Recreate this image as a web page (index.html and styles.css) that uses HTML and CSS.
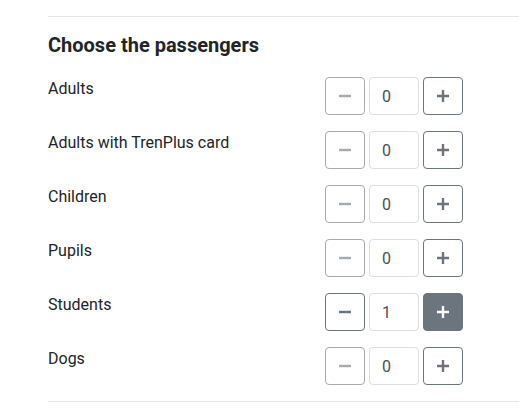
FILE: index.html
```html
<!DOCTYPE html>
<html lang="en">
<head>
<meta charset="utf-8">
<link rel="stylesheet" href="styles.css">
</head>
<body>
<section class="panel">
  <h2 class="title">Choose the passengers</h2>
  <div class="rows">
    <div class="row">
      <span class="label">Adults</span>
      <div class="spinner">
        <button class="btn btn-minus is-disabled" aria-label="Remove"><svg viewBox="0 0 14 14"><path d="M1 7h12"/></svg></button>
        <input class="count" value="0" readonly>
        <button class="btn btn-plus" aria-label="Add"><svg viewBox="0 0 14 14"><path d="M1 7h12M7 1v12"/></svg></button>
      </div>
    </div>
    <div class="row">
      <span class="label">Adults with TrenPlus card</span>
      <div class="spinner">
        <button class="btn btn-minus is-disabled" aria-label="Remove"><svg viewBox="0 0 14 14"><path d="M1 7h12"/></svg></button>
        <input class="count" value="0" readonly>
        <button class="btn btn-plus" aria-label="Add"><svg viewBox="0 0 14 14"><path d="M1 7h12M7 1v12"/></svg></button>
      </div>
    </div>
    <div class="row">
      <span class="label">Children</span>
      <div class="spinner">
        <button class="btn btn-minus is-disabled" aria-label="Remove"><svg viewBox="0 0 14 14"><path d="M1 7h12"/></svg></button>
        <input class="count" value="0" readonly>
        <button class="btn btn-plus" aria-label="Add"><svg viewBox="0 0 14 14"><path d="M1 7h12M7 1v12"/></svg></button>
      </div>
    </div>
    <div class="row">
      <span class="label">Pupils</span>
      <div class="spinner">
        <button class="btn btn-minus is-disabled" aria-label="Remove"><svg viewBox="0 0 14 14"><path d="M1 7h12"/></svg></button>
        <input class="count" value="0" readonly>
        <button class="btn btn-plus" aria-label="Add"><svg viewBox="0 0 14 14"><path d="M1 7h12M7 1v12"/></svg></button>
      </div>
    </div>
    <div class="row">
      <span class="label">Students</span>
      <div class="spinner">
        <button class="btn btn-minus" aria-label="Remove"><svg viewBox="0 0 14 14"><path d="M1 7h12"/></svg></button>
        <input class="count" value="1" readonly>
        <button class="btn btn-plus is-active" aria-label="Add"><svg viewBox="0 0 14 14"><path d="M1 7h12M7 1v12"/></svg></button>
      </div>
    </div>
    <div class="row">
      <span class="label">Dogs</span>
      <div class="spinner">
        <button class="btn btn-minus is-disabled" aria-label="Remove"><svg viewBox="0 0 14 14"><path d="M1 7h12"/></svg></button>
        <input class="count" value="0" readonly>
        <button class="btn btn-plus" aria-label="Add"><svg viewBox="0 0 14 14"><path d="M1 7h12M7 1v12"/></svg></button>
      </div>
    </div>
  </div>
</section>
</body>
</html>
```

FILE: styles.css
```css
* { box-sizing: border-box; }
html, body { margin: 0; padding: 0; background: #fff; }
body {
  font-family: Roboto, "Liberation Sans", Arial, sans-serif;
  color: #212529;
  font-size: 16px;
  line-height: 24px;
}
.panel {
  margin: 16px 0 0 48px;
  border-top: 1px solid #e3e6e9;
  border-bottom: 1px solid #e3e6e9;
  padding-top: 16px;
}
.title {
  margin: 0 0 20px;
  font-size: 20px;
  line-height: 24px;
  font-weight: 700;
  color: #212529;
}
.row {
  display: grid;
  grid-template-columns: 277px auto;
  align-items: start;
  margin-bottom: 16px;
}
.label { display: block; }
.spinner {
  display: flex;
  gap: 4px;
}
.btn {
  width: 40px;
  height: 38px;
  border: 1px solid #6c757d;
  border-radius: 4px;
  background: #fff;
  padding: 0;
  display: flex;
  align-items: center;
  justify-content: center;
}
.btn svg {
  width: 14px;
  height: 14px;
  stroke: #6c757d;
  stroke-width: 2.4;
  fill: none;
}
.btn.is-disabled { opacity: 0.6; }
.btn.is-active { background: #6c757d; }
.btn.is-active svg { stroke: #fff; }
.count {
  width: 50px;
  height: 38px;
  border: 1px solid #dadee2;
  border-radius: 4px;
  padding: 0 12px;
  font-family: Roboto, "Liberation Sans", Arial, sans-serif;
  font-size: 16px;
  color: #495057;
  background: #fff;
}
```
